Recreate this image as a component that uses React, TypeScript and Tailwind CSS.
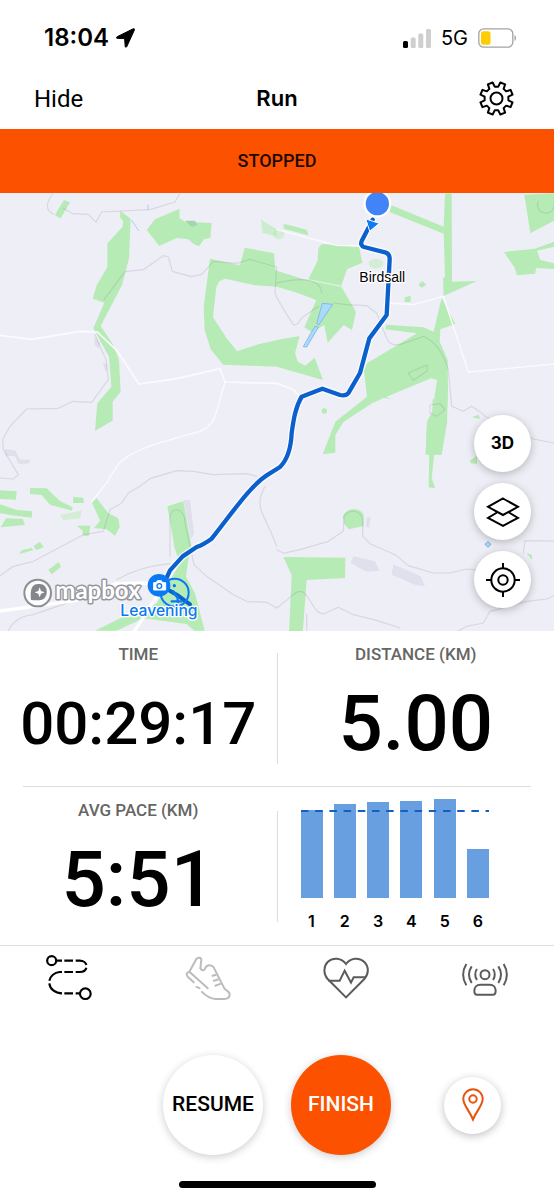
import { useState } from "react";
import type { ReactNode } from "react";

const splits = [
  { km: 1, height: 88 },
  { km: 2, height: 94 },
  { km: 3, height: 96 },
  { km: 4, height: 97 },
  { km: 5, height: 99 },
  { km: 6, height: 49 },
];

// Outline of a cog with eight teeth, centred on 0,0
const gearPath = (() => {
  const points: string[] = [];
  for (let i = 0; i < 8; i++) {
    const mid = i * 45 + 22.5;
    [
      [12, -14],
      [16.5, -9],
      [16.5, 9],
      [12, 14],
    ].forEach(([r, offset]) => {
      const a = ((mid + offset) * Math.PI) / 180;
      points.push(`${(r * Math.cos(a)).toFixed(2)} ${(r * Math.sin(a)).toFixed(2)}`);
    });
  }
  return `M${points.join("L")}Z`;
})();

const routePath =
  "M1118 80 1085 144Q1080 158 1092 162L1155 178Q1170 182 1169 200L1160 366 1108 436 1080 540 1046 599Q1038 610 1020 606L967 587 905 611C885 645 880 685 875 720Q872 790 840 822L800 847C750 880 700 955 635 1037Q610 1055 590 1062L548 1090 510 1132 495 1165";

function StatusBar() {
  return (
    <div className="flex h-[68px] items-center justify-between pt-2 pr-[37px] pl-11">
      <div className="flex items-center gap-[7px] font-['Inter',sans-serif] text-2xl font-semibold">
        18:04
        <svg viewBox="0 0 19 20" className="h-5 w-[19px]" fill="currentColor">
          <path
            d="M17.2.8 1.200 8.700C0 9.300.2 10.300 1.400 10.400L8.600 10.600 9.200 18.300C9.300 19.500 10.300 19.700 10.800 18.600L18.400 2C18.800 1 18.200.4 17.200.8Z"
            stroke="currentColor"
            strokeWidth="1"
          />
        </svg>
      </div>
      <div className="flex items-center gap-[10px] font-['Inter',sans-serif] text-xl">
        <svg viewBox="0 0 28 19" className="h-[19px] w-7" fill="#cfcfcf">
          <rect x="0" y="12" width="5" height="7" rx="1.500" fill="#000" />
          <rect x="7.700" y="8.500" width="5" height="10.500" rx="1.500" />
          <rect x="15.300" y="4.500" width="5" height="14.500" rx="1.500" />
          <rect x="23" y="0" width="5" height="19" rx="1.500" />
        </svg>
        5G
        <svg viewBox="0 0 39 20" className="h-5 w-[39px]">
          <rect x=".8" y=".8" width="34" height="18.400" rx="5" fill="#fff" stroke="#a3a3a3" strokeWidth="1.300" />
          <path d="M36.500 7v6c2-.8 2-5.200 0-6Z" fill="#a3a3a3" />
          <rect x="3" y="3.200" width="9.500" height="13.600" rx="2.500" fill="#ffcc00" />
        </svg>
      </div>
    </div>
  );
}

function MapArt() {
  return (
    <svg
      viewBox="0 0 1662 1314"
      preserveAspectRatio="xMidYMid slice"
      className="block h-full w-full"
      strokeLinejoin="round"
      strokeLinecap="round"
    >
      <rect width="1662" height="1314" fill="#eeeef6" />

      {/* Woodland */}
      <g fill="#b7ebb6">
        <g transform="translate(0 -9)">
          <path d="M192 30 210 37 181 86 165 74Z" />
          <path d="M361 62 392 86 387 205 366 285 302 408 340 465 357 510 362 605 338 635V692L285 722 292 640 334 590 327 500 280 415 313 338 278 326 290 286 322 232V160L368 110 369 93 360 82Z" />
          <path d="M440 120 465 88 539 56 538 84 555 95 635 99 631 144 612 148 597 169 582 163 565 148 530 144 478 168Z" />
          <path
            fillRule="evenodd"
            d="M630 206 720 226 734 173 822 190 826 240 832 242V290L765 286 675 266 658 274 649 292 639 382 680 445 711 484 775 463 832 450V530L670 524 632 478 614 420 611 350Z"
          />
          <path d="M783 88 800 100 831 118V140L787 128Z" opacity=".6" />
        </g>
        <g transform="translate(831 -9)">
          <path d="M20 102 48 108 90 120 94 136 20 116Z" />
          <path d="M134 162 246 170 256 218 210 238 193 287 94 268 122 212 124 175Z" />
          <path d="M-1 242 80 268 193 290 237 365 225 420 200 405 152 458 142 405 105 427 82 412 118 330 60 308-1 290Z" />
          <path d="M-1 450 68 438 54 490 62 515 85 527 113 503 138 570-1 530Z" />
          <path d="M342 45 500 110 503 30 505 10H524L525 275 600 273 500 318 498 265 504 260 500 131 338 66Z" />
          <path d="M742 14 831 10V92L760 130ZM681 186 773 176 831 155V170L780 182 790 210 831 220V237L778 234 774 251 720 256 712 232Z" />
          <path d="M424 284 436 273 448 284 434 293ZM383 322 401 317V336H383Z" />
          <path d="M495 325 535 402 490 418 488 455 512 510 513 600 510 700 494 793H446L450 695 466 665 480 570 462 565 318 625 285 640 200 695 175 735V788L137 793 175 695 270 620 261 540 270 520 420 430 325 418 328 404 440 412 470 425 490 340Z" />
          <path d="M285 600 342 627 310 622Z" />
          <ellipse cx="297" cy="221" rx="22" ry="14" opacity=".5" />
          <ellipse cx="5" cy="133" rx="17" ry="15" opacity=".5" />
        </g>
        <g transform="translate(0 621)">
          <path d="M0 271 50 274 48 299 0 297ZM0 313 50 330 97 334 95 353 35 346 0 340ZM2 382 18 355 68 357 75 375Z" />
          <path d="M90 264 140 265 180 303 218 322 216 332 150 314 125 285 90 282ZM220 290 250 293 252 309 219 309Z" />
          <path d="M180 345 245 332 240 355 190 360Z" opacity=".5" />
          <path d="M290 295 325 340 355 355 359 382 345 407 320 388 282 384 300 362 276 308ZM230 377H271L266 409 248 406 248 392Z" />
          <path d="M57 462 66 451 96 443 99 451ZM101 437 120 425 131 442 108 450ZM145 510 176 486 183 500 156 523Z" />
          <path d="M502 319 550 304 574 435 565 480 558 530 585 580 614 692H583L560 672 430 655 350 692H285L360 655 470 610 540 490 524 445Z" />
        </g>
        <g transform="translate(831 621)">
          <path d="M467-2H512L494 164H446L450 68 466 35ZM457 160H472L464 235 475 265 455 262ZM584 52 605 44 609 57ZM578 182 600 168V192L582 190Z" />
          <path d="M198 350C205 322 250 320 260 345V378L215 388 202 372ZM748 458 765 465V480Z" />
          <path d="M19 471 205 473 204 534 89 540 77 700H36L44 525Z" />
          <circle cx="142" cy="33" r="8" />
        </g>
      </g>

      {/* Lighter patches and built-up areas */}
      <g fill="#dfe0ec">
        <path d="M1060 1090 1125 1105 1138 1133 1100 1136 1052 1110ZM1180 1114 1262 1150 1275 1180 1245 1175 1175 1145ZM1100 974 1112 972 1108 1003 1098 1003Z" />
        <path d="M550 921H570L582 1020 574 1040ZM15 768 45 772 60 800 92 800 85 812 55 812 45 790 15 788Z" />
        <path d="M283 430 300 450 297 468 283 455ZM308 508 322 515 318 540Z" />
        <path d="M555 83H585L592 97 575 101Z" fill="#a3d6ad" />
      </g>

      {/* Water */}
      <g fill="#a9dcfb" stroke="#85b9e8" strokeWidth="3">
        <path d="M968 331 998 334 956 396 951 393ZM946 400 955 403 920 462 911 461Z" />
        <rect x="1458" y="1048" width="12" height="12" transform="rotate(45 1464 1054)" />
        <path d="M395 82 416 113M444 36V50" fill="none" opacity=".6" />
      </g>

      {/* Contours and footpaths */}
      <g fill="none" stroke="#55506a" strokeOpacity=".14" strokeWidth="3.500">
        <path d="M158 3C130 40 145 55 160 64M190 46 218 62 265 64 288 88 305 57 450 50 525 27 538 4" />
        <path d="M312 320 375 236 430 230 490 188 505 192 517 235 575 251 605 244 640 205 710 211 750 199 830 222 825 300Q830 318 880 395Q892 400 905 375L955 340" />
        <path d="M831 270Q960 240 965 300M1000 330 1040 335 1100 338 1130 360 1158 430Q1165 460 1200 455L1270 430Q1320 450 1345 530L1355 640 1390 655 1415 640 1445 660Q1460 680 1510 690L1600 738 1662 750" />
        <path d="M1225 540 1282 515 1280 535 1240 562ZM1290 636 1320 632 1335 650 1310 670 1290 660ZM1615 25A25 25 0 1 0 1662 30" />
        <path d="M285 425 318 500 325 560 275 628 220 625 175 646 80 648 30 700 8 740 10 770 55 845 40 858 0 855" />
        <path d="M0 1148 40 1120 100 1105 250 1025 310 1015 330 950 365 930 385 900 420 880 450 857 530 833 580 835 640 845 740 842 770 850" />
        <path d="M510 1090V975C510 940 555 940 555 990L582 1115 620 1150 700 1205 740 1225 800 1228 830 1245M795 880C760 950 790 950 830 1060M25 1314Q45 1270 100 1265L215 1225M350 1160Q420 1120 510 1112" />
        <path d="M831 1070 850 1081 900 1070 985 1045 1030 1015 1032 970C1045 945 1090 950 1088 990V1030L1110 1052 1185 1085 1225 1118 1300 1140 1350 1140 1400 1128 1450 1133" />
        <path d="M831 1245 880 1205C925 1165 930 1260 970 1263L1015 1243 1060 1265 1130 1282 1200 1305M1375 1314 1400 1300 1450 1290 1470 1255 1580 1225 1640 1218 1662 1208M1570 1080 1575 1043 1662 1044M920 1314V1265" />
      </g>

      {/* Roads */}
      <g fill="none" stroke="#fbfbfe" strokeWidth="5">
        <path d="M0 427 95 439 240 415 292 417 350 472 417 573 530 557 660 527 675 567 831 571 880 590 905 617" />
        <path d="M675 567 650 655Q640 700 600 715L480 749Q380 780 350 820L320 870 275 925M831 110 1010 157 1080 159M1165 330 1240 335 1330 310 1405 537 1662 513" strokeWidth="4" />
      </g>
      <path d="M0 1254 230 1222 300 1190 350 1172 440 1170 480 1195 400 1320" fill="none" stroke="#fff" strokeWidth="10" />

      {/* Recorded route */}
      <path d={routePath} fill="none" stroke="#fff" strokeWidth="21" opacity=".8" />
      <path d={routePath} fill="none" stroke="#0b60ce" strokeWidth="13" />
      <path d="M1098 78 1138 91 1110 114Z" fill="#0d7bf2" stroke="#fff" strokeWidth="3" />
      <circle cx="1132" cy="32" r="42" fill="#fff" />
      <circle cx="1132" cy="32" r="35" fill="#4084f7" />

      {/* Logo */}
      <g>
        <circle cx="113" cy="1200" r="40" fill="#fff" fillOpacity=".8" stroke="#8d8e94" strokeWidth="6" />
        <path d="M93 1221C88 1175 105 1173 119 1173C145 1173 147 1212 126 1220C116 1223 100 1222 93 1221Z" fill="#85868c" />
        <path d="M119 1183 123 1194 134 1198 123 1202 119 1213 115 1202 104 1198 115 1194Z" fill="#fff" />
        <text
          x="166"
          y="1219"
          fill="#fff"
          stroke="#96979d"
          strokeWidth="9"
          paintOrder="stroke"
          className="font-['Lato',sans-serif] text-[72px] font-bold"
        >
          mapbox
        </text>
      </g>

      {/* Start pins */}
      <g>
        <path d="M495 1185 530 1205 570 1234" fill="none" stroke="#0b60ce" strokeWidth="12" />
        <circle cx="524" cy="1199" r="42" fill="none" stroke="#0b78f5" strokeWidth="6" />
        <path d="M520 1195 533 1215V1232M515 1225H545" fill="none" stroke="#0b78f5" strokeWidth="7" />
        <circle cx="523" cy="1178" r="5" fill="#0b78f5" />
        <circle cx="477" cy="1177" r="34" fill="#0b78f5" />
        <path d="M462 1169H468L472 1163H484L488 1169H497V1191H462Z" fill="#fff" stroke="#fff" strokeWidth="3" />
        <circle cx="478" cy="1179" r="7" fill="none" stroke="#0b78f5" strokeWidth="4" />
      </g>

      {/* Place names */}
      <g paintOrder="stroke" stroke="#fff" strokeWidth="8">
        <text x="1078" y="266" fill="#000" className="font-['Liberation_Sans',sans-serif] text-[42px]">
          Birdsall
        </text>
        <text x="361" y="1268" fill="#0b78f5" className="font-['Inter',sans-serif] text-[47px] font-medium">
          Leavening
        </text>
      </g>
    </svg>
  );
}

function MapButton({ label, children }: { label: string; children: ReactNode }) {
  return (
    <button
      aria-label={label}
      className="flex size-[57px] items-center justify-center rounded-full bg-white font-['Inter',sans-serif] text-[17px] font-bold shadow-[0_2px_8px_rgba(0,0,0,0.25)]"
    >
      {children}
    </button>
  );
}

function Stat({ label, value, size }: { label: string; value: string; size: string }) {
  return (
    <div className="flex h-full flex-col items-center pt-[11px]">
      <h2 className="font-['Roboto',sans-serif] text-[17px] leading-6 font-medium text-[#666664]">{label}</h2>
      <p className={`flex h-[116px] items-center font-['Roboto',sans-serif] leading-none font-medium ${size}`}>{value}</p>
    </div>
  );
}

function SplitsChart() {
  return (
    <div className="h-full pt-[11px] pr-[65px] pl-[23px]">
      <div className="relative flex h-[100px] items-end justify-between">
        {splits.map((split) => (
          <div key={split.km} className="w-[22px] bg-[#679fe1]" style={{ height: split.height }} />
        ))}
        <svg className="absolute top-3 left-0 h-[2px] w-full">
          <line x1="0" y1="1" x2="100%" y2="1" stroke="#1360c0" strokeWidth="2" strokeDasharray="7.500 6.700" />
        </svg>
      </div>
      <div className="mt-[11px] flex justify-between font-['Inter',sans-serif] text-base leading-6 font-semibold">
        {splits.map((split) => (
          <span key={split.km} className="w-[22px] text-center">
            {split.km}
          </span>
        ))}
      </div>
    </div>
  );
}

const tabs = [
  {
    label: "Route",
    color: "text-black",
    icon: (
      <svg viewBox="136 39 144 144" className="size-12" fill="none" stroke="currentColor" strokeWidth="6.500">
        <circle cx="156" cy="62" r="13.500" />
        <circle cx="257" cy="161" r="16" />
        <path d="M170 62H187M194 62H220M228 62H240C252 62 259 69 260 75M260 83C258 92 250 96 240 96H228M220 96H194M187 96H180C163 98 152 110 149 122M149 130C151 147 166 160 187 160M194 160H220M228 160H241" />
      </svg>
    ),
  },
  {
    label: "Shoes",
    color: "text-[#bdbcba]",
    icon: (
      <svg viewBox="551 39 144 144" className="size-12" fill="none" stroke="currentColor" strokeWidth="6" strokeLinejoin="round">
        <path d="M567 95 588 57C593 51 603 52 603 60L600 85C606 94 613 91 615 84C620 73 635 74 640 82L672 145C678 153 688 153 688 163C688 173 681 177 672 177H646C630 176 617 168 603 154" />
        <path d="M567 95C559 97 556 104 562 110L582 128M567 95 624 146M586 140 600 145M634 108 648 104M638 123 655 118M643 138 662 131" />
      </svg>
    ),
  },
  {
    label: "Heart rate",
    color: "text-[#5b5b59]",
    icon: (
      <svg viewBox="135 39 144 144" className="size-12" fill="none" stroke="currentColor" strokeWidth="6">
        <path d="M207 172 152 117C138 101 140 78 152 66C168 50 194 54 207 72C220 54 246 50 262 66C276 80 276 101 262 117Z" />
        <path d="M154 122H188L203 92 222 128 230 112H266" />
      </svg>
    ),
  },
  {
    label: "Beacon",
    color: "text-[#5b5b59]",
    icon: (
      <svg viewBox="552 39 144 144" className="size-12" fill="none" stroke="currentColor" strokeWidth="6">
        <circle cx="624" cy="104" r="13.500" />
        <path d="M610 134H638C650 134 656 143 656 152C656 162 653 164 648 164H600C595 164 592 161 592 152C592 143 598 134 610 134Z" />
        <path d="M600 87C593 96 593 110 600 120M584 79C574 94 574 113 584 129M568 72C556 92 556 116 568 136M648 87C655 96 655 110 648 120M664 79C674 94 674 113 664 129M680 72C692 92 692 116 680 136" />
      </svg>
    ),
  },
];

export default function App() {
  const [stopped, setStopped] = useState(true);

  return (
    <main className="min-h-screen bg-white text-black">
      <StatusBar />

      {/* Header */}
      <header className="grid h-[61px] grid-cols-3 items-center pr-10 pl-[34px] text-2xl">
        <button className="justify-self-start font-['Roboto',sans-serif]">Hide</button>
        <h1 className="pl-[6px] text-center font-['Inter',sans-serif] text-[22px] font-semibold">Run</h1>
        <button aria-label="Settings" className="justify-self-end">
          <svg viewBox="-17.500 -17.500 35 35" className="size-[35px]" fill="none" stroke="#000" strokeWidth="2" strokeLinejoin="round">
            <path d={gearPath} />
            <circle r="6" />
          </svg>
        </button>
      </header>

      <div className="flex h-16 items-center justify-center bg-[#fc5200] font-['Roboto',sans-serif] text-lg font-medium text-[#1a0a02]">
        {stopped ? "STOPPED" : "RECORDING"}
      </div>

      {/* Map */}
      <section className="relative h-[438px] overflow-hidden">
        <MapArt />
        <div className="absolute right-[23px] bottom-[23px] flex flex-col gap-[11px]">
          <MapButton label="3D view">3D</MapButton>
          <MapButton label="Map layers">
            <svg viewBox="0 0 34 30" className="h-[30px] w-[34px]" fill="none" stroke="#000" strokeWidth="2">
              <path d="M17 1.500 32 9.800 17 18 2 9.800ZM11 15.500 2 21 17 28.800 32 21 23 15.500" />
            </svg>
          </MapButton>
          <MapButton label="Centre on my location">
            <svg viewBox="0 0 34 34" className="size-[34px]" fill="none" stroke="#000" strokeWidth="2">
              <circle cx="17" cy="17" r="11.700" />
              <circle cx="17" cy="17" r="4.700" />
              <path d="M17 0V6M17 28V34M0 17H6M28 17H34" />
            </svg>
          </MapButton>
        </div>
      </section>

      {/* Stats */}
      <section>
        <div className="grid h-[155px] grid-cols-[1fr_1px_1fr] items-center">
          <Stat label="TIME" value="00:29:17" size="text-[60px]" />
          <div className="h-[111px] bg-[#dedede]" />
          <Stat label="DISTANCE (KM)" value="5.00" size="text-[78px]" />
        </div>
        <hr className="mx-[23px] border-[#dedede]" />
        <div className="grid h-[159px] grid-cols-[1fr_1px_1fr] items-center border-b border-[#dedede]">
          <Stat label="AVG PACE (KM)" value="5:51" size="text-[78px]" />
          <div className="h-[111px] bg-[#dedede]" />
          <SplitsChart />
        </div>
      </section>

      {/* Tabs */}
      <nav className="grid grid-cols-4 pt-[7px]">
        {tabs.map((tab) => (
          <button key={tab.label} aria-label={tab.label} className={`flex justify-center ${tab.color}`}>
            {tab.icon}
          </button>
        ))}
      </nav>

      {/* Controls */}
      <footer className="flex flex-col items-center pt-[54px] pb-3">
        <div className="grid w-full grid-cols-[1fr_auto_1fr] items-center font-['Roboto',sans-serif] text-[21px] font-medium">
          <div />
          <div className="flex gap-7">
            <button
              onClick={() => setStopped(false)}
              className="size-[100px] rounded-full bg-white shadow-[0_2px_8px_rgba(0,0,0,0.2)]"
            >
              RESUME
            </button>
            <button className="size-[100px] rounded-full bg-[#fc5200] text-white shadow-[0_2px_8px_rgba(0,0,0,0.2)]">
              FINISH
            </button>
          </div>
          <button
            aria-label="Add waypoint"
            className="flex size-[57px] items-center justify-center justify-self-center rounded-full bg-white shadow-[0_2px_8px_rgba(0,0,0,0.25)]"
          >
            <svg viewBox="0 0 22 34" className="h-[34px] w-[22px]" fill="none" stroke="#e8530e" strokeWidth="2">
              <path d="M11 31.500C7 22 1.300 17 1.300 11A9.700 9.700 0 0 1 20.700 11C20.700 17 15 22 11 31.500Z" />
              <circle cx="11" cy="11" r="3.700" />
            </svg>
          </button>
        </div>
        <div className="mt-[26px] h-[7px] w-[197px] rounded-full bg-black" />
      </footer>
    </main>
  );
}
